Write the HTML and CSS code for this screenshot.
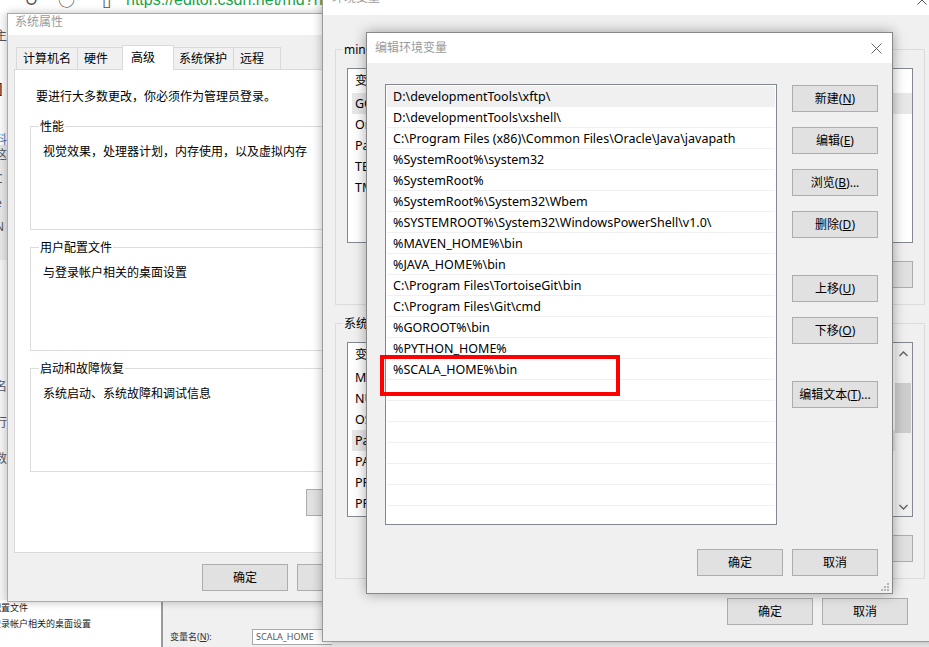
FILE: index.html
```html
<!DOCTYPE html>
<html lang="zh-CN">
<head>
<meta charset="utf-8">
<title>编辑环境变量</title>
<link rel="stylesheet" href="styles.css">
</head>
<body>
<div class="desktop">

  <!-- page behind the dialogs -->
  <div class="browser-bar">
    <span class="bb-icon">↻</span>
    <span class="bb-icon bb-home">○</span>
    <span class="bb-icon bb-sq">▯</span>
    <span class="bb-url">https://editor.csdn.net/md?not_checkout=1</span>
  </div>
  <div class="page-strip">
    <div class="ps-white"><span class="ps-ch">主</span><span class="ps-ch ps-b">]</span><span class="ps-ch ps-blue">料</span></div>
    <div class="ps-gray"><span class="ps-ch">这</span><span class="ps-ch">C</span><span class="ps-ch">e</span><span class="ps-ch">N</span></div>
    <div class="ps-light"><span class="ps-ch">名</span><span class="ps-ch">行</span><span class="ps-ch">数</span></div>
  </div>
  <div class="back-dialog">
    <div class="back-left">
      <span class="back-line">配置文件</span>
      <span class="back-line">登录帐户相关的桌面设置</span>
    </div>
    <div class="back-right">
      <span class="back-label">变量名(<u>N</u>):</span>
      <span class="back-input">SCALA_HOME</span>
    </div>
  </div>

  <!-- 系统属性 -->
  <section class="win win-sys">
    <header class="titlebar sys-titlebar"><span class="title">系统属性</span></header>
    <div class="sys-body">
      <div class="tabs">
        <div class="tab tab-w60">计算机名</div>
        <div class="tab">硬件</div>
        <div class="tab tab-active">高级</div>
        <div class="tab tab-w60">系统保护</div>
        <div class="tab">远程</div>
      </div>
      <div class="tab-panel">
        <p class="intro">要进行大多数更改，你必须作为管理员登录。</p>
        <div class="group sys-group">
          <div class="group-label">性能</div>
          <p class="group-text">视觉效果，处理器计划，内存使用，以及虚拟内存</p>
        </div>
        <div class="group sys-group">
          <div class="group-label">用户配置文件</div>
          <p class="group-text">与登录帐户相关的桌面设置</p>
        </div>
        <div class="group sys-group">
          <div class="group-label">启动和故障恢复</div>
          <p class="group-text">系统启动、系统故障和调试信息</p>
        </div>
        <div class="panel-actions"><button class="btn btn-wide">环境变量(<u>N</u>)...</button></div>
      </div>
      <div class="dlg-actions sys-actions">
        <button class="btn">确定</button>
        <button class="btn">取消</button>
        <button class="btn">应用(<u>A</u>)</button>
      </div>
    </div>
  </section>

  <!-- 环境变量 -->
  <section class="win win-env">
    <header class="titlebar env-titlebar">
      <span class="title">环境变量</span>
      <svg class="close-x" width="10" height="10" viewBox="0 0 10 10"><path d="M0.5 0.5L9.5 9.5M9.5 0.5L0.5 9.5" stroke="#555" stroke-width="1" fill="none"/></svg>
    </header>
    <div class="env-body">
      <div class="group env-group">
        <div class="group-label">minsx 的用户变量(<u>U</u>)</div>
        <div class="env-list">
          <div class="env-rows">
            <div class="env-head">变量</div>
            <div class="env-row env-sel">GOPATH</div>
            <div class="env-row">OneDrive</div>
            <div class="env-row">Path</div>
            <div class="env-row">TEMP</div>
            <div class="env-row">TMP</div>
          </div>
        </div>
        <div class="group-actions">
          <button class="btn">新建(<u>N</u>)...</button>
          <button class="btn">编辑(<u>E</u>)...</button>
          <button class="btn">删除(<u>D</u>)</button>
        </div>
      </div>
      <div class="group env-group env-group2">
        <div class="group-label">系统变量(<u>S</u>)</div>
        <div class="env-list">
          <div class="env-rows">
            <div class="env-head">变量</div>
            <div class="env-row">MAVEN_HOME</div>
            <div class="env-row">NUMBER_OF_PROCESSORS</div>
            <div class="env-row">OS</div>
            <div class="env-row env-sel">Path</div>
            <div class="env-row">PATHEXT</div>
            <div class="env-row">PROCESSOR_ARCHITECTURE</div>
            <div class="env-row">PROCESSOR_IDENTIFIER</div>
          </div>
          <div class="vscroll">
            <svg class="sc-arrow" width="9" height="6" viewBox="0 0 9 6"><path d="M0.5 5L4.5 1L8.5 5" stroke="#606060" stroke-width="1.3" fill="none"/></svg>
            <div class="sc-track"><div class="sc-thumb"></div></div>
            <svg class="sc-arrow" width="9" height="6" viewBox="0 0 9 6"><path d="M0.5 1L4.5 5L8.5 1" stroke="#606060" stroke-width="1.3" fill="none"/></svg>
          </div>
        </div>
        <div class="group-actions">
          <button class="btn">新建(<u>W</u>)...</button>
          <button class="btn">编辑(<u>I</u>)...</button>
          <button class="btn">删除(<u>L</u>)</button>
        </div>
      </div>
      <div class="dlg-actions env-actions">
        <button class="btn">确定</button>
        <button class="btn">取消</button>
      </div>
    </div>
  </section>

  <!-- 编辑环境变量 -->
  <section class="win win-edit">
    <header class="titlebar edit-titlebar">
      <span class="title">编辑环境变量</span>
      <svg class="close-x" width="11" height="11" viewBox="0 0 11 11"><path d="M0.5 0.5L10.5 10.5M10.5 0.5L0.5 10.5" stroke="#666" stroke-width="1" fill="none"/></svg>
    </header>
    <div class="edit-body">
      <div class="edit-main">
        <div class="path-list">
          <div class="path-row path-sel">D:\developmentTools\xftp\</div>
          <div class="path-row">D:\developmentTools\xshell\</div>
          <div class="path-row">C:\Program Files (x86)\Common Files\Oracle\Java\javapath</div>
          <div class="path-row">%SystemRoot%\system32</div>
          <div class="path-row">%SystemRoot%</div>
          <div class="path-row">%SystemRoot%\System32\Wbem</div>
          <div class="path-row">%SYSTEMROOT%\System32\WindowsPowerShell\v1.0\</div>
          <div class="path-row">%MAVEN_HOME%\bin</div>
          <div class="path-row">%JAVA_HOME%\bin</div>
          <div class="path-row">C:\Program Files\TortoiseGit\bin</div>
          <div class="path-row">C:\Program Files\Git\cmd</div>
          <div class="path-row">%GOROOT%\bin</div>
          <div class="path-row">%PYTHON_HOME%</div>
          <div class="path-row">%SCALA_HOME%\bin</div>
          <div class="path-row"></div>
          <div class="path-row"></div>
          <div class="path-row"></div>
          <div class="path-row"></div>
          <div class="path-row"></div>
          <div class="path-row"></div>
          <div class="path-row"></div>
        </div>
        <div class="edit-buttons">
          <button class="btn">新建(<u>N</u>)</button>
          <button class="btn mt15">编辑(<u>E</u>)</button>
          <button class="btn mt14">浏览(<u>B</u>)...</button>
          <button class="btn mt15">删除(<u>D</u>)</button>
          <button class="btn mt36">上移(<u>U</u>)</button>
          <button class="btn mt14">下移(<u>O</u>)</button>
          <button class="btn mt36">编辑文本(<u>T</u>)...</button>
        </div>
      </div>
      <div class="dlg-actions edit-actions">
        <button class="btn">确定</button>
        <button class="btn">取消</button>
      </div>
    </div>
    <svg class="grip" width="8" height="8" viewBox="0 0 8 8"><rect x="6" y="0" width="2" height="2" fill="#b5b5b5"/><rect x="3" y="3" width="2" height="2" fill="#b5b5b5"/><rect x="6" y="3" width="2" height="2" fill="#b5b5b5"/><rect x="0" y="6" width="2" height="2" fill="#b5b5b5"/><rect x="3" y="6" width="2" height="2" fill="#b5b5b5"/><rect x="6" y="6" width="2" height="2" fill="#b5b5b5"/></svg>
    <div class="highlight-box"></div>
  </section>

</div>
</body>
</html>
```

FILE: styles.css
```css
* { box-sizing: border-box; }
html, body { margin: 0; padding: 0; }
body {
  width: 929px;
  height: 647px;
  overflow: hidden;
  background: #f0f0f0;
  font-family: "Noto Sans", "Noto Sans CJK SC", sans-serif;
  font-size: 12px;
  line-height: 16px;
  color: #000;
}
p { margin: 0; }
u { text-decoration: underline; text-underline-offset: 1px; }

.desktop { position: relative; width: 929px; height: 647px; overflow: hidden; }

/* ---------- background page ---------- */
.browser-bar {
  position: absolute; left: 0; top: 0;
  width: 929px; height: 13px;
  background: #fff;
  overflow: hidden;
  display: flex;
  align-items: flex-start;
  padding-left: 24px;
}
.bb-icon { margin-top: -10px; font-size: 17px; line-height: 20px; color: #555; width: 34px; }
.bb-sq { width: 24px; margin-left: 10px; }
.bb-url { margin-top: -10px; font-size: 16px; line-height: 20px; color: #1aa34a; font-family: "Liberation Sans", sans-serif; }

.page-strip {
  position: absolute; left: 0; top: 13px;
  width: 8px; height: 590px;
  display: flex; flex-direction: column;
  background: #f2f2f2;
  overflow: hidden;
}
.ps-white { height: 132px; background: #fbfbfb; display: flex; flex-direction: column; padding-top: 16px; gap: 38px; }
.ps-gray { height: 115px; background: #e6e6e6; display: flex; flex-direction: column; gap: 10px; padding-top: 2px; border-top: 1px solid #ddd; }
.ps-light { height: 343px; background: #f4f4f4; display: flex; flex-direction: column; gap: 22px; padding-top: 120px; }
.ps-ch { font-size: 12px; line-height: 14px; color: #555; margin-left: -5px; }
.ps-b { color: #222; font-size: 14px; margin-left: -2px; }
.ps-blue { color: #4b6fa8; }

.back-dialog {
  position: absolute; left: 0; top: 600px;
  width: 929px; height: 47px;
  display: flex;
  background: #e9e9e9;
}
.back-left {
  width: 161px; background: #fff;
  display: flex; flex-direction: column;
}
.back-line { font-size: 9px; line-height: 16px; color: #222; margin-left: -8px; }
.back-right {
  flex: 1;
  background: #f0f0f0;
  border-left: 2px solid #9a9a9a;
  display: flex; align-items: flex-end;
  padding: 0 0 4px 7px;
}
.back-label { font-size: 9px; line-height: 12px; color: #333; width: 82px; }
.back-input {
  width: 80px; height: 16px;
  background: #fff; border: 1px solid #a8a8a8; border-right: none;
  font-size: 9px; line-height: 14px; color: #555; padding-left: 3px;
  margin-bottom: -2px;
}

/* ---------- windows ---------- */
.win { position: absolute; background: #f0f0f0; }
.titlebar { background: #fff; display: flex; align-items: center; }
.title { color: #9a9a9a; }
.close-x { margin-left: auto; display: block; }

.btn {
  display: flex; align-items: center; justify-content: center;
  width: 86px; height: 27px;
  margin: 0; padding: 0;
  background: #e1e1e1;
  border: 1px solid #adadad;
  font: inherit;
  font-size: 12px;
  color: #000;
  white-space: nowrap;
}

.dlg-actions { display: flex; justify-content: flex-end; gap: 9px; }

.group { border: 1px solid #dcdcdc; }
.group-label {
  width: fit-content;
  margin: -8px 0 0 8px;
  padding: 0 1px;
  line-height: 16px;
  background: #fff;
  white-space: nowrap;
}

/* 系统属性 */
.win-sys {
  left: 7px; top: 13px;
  width: 486px; height: 589px;
  border: 1px solid #aaa;
  box-shadow: 0 0 8px rgba(0,0,0,0.25);
}
.sys-titlebar { height: 21px; padding-left: 7px; align-items: flex-start; }
.sys-titlebar .title { line-height: 16px; }
.sys-body { padding-top: 10px; }
.tabs { display: flex; align-items: flex-end; padding-left: 8px; height: 24px; }
.tab {
  height: 22px;
  min-width: 48px;
  padding: 0 6px;
  display: flex; align-items: center;
  background: #f0f0f0;
  border: 1px solid #d9d9d9;
  border-bottom: none;
  margin-right: -1px;
  white-space: nowrap;
}
.tab-w60 { min-width: 60px; }
.tab-active {
  height: 25px;
  margin: 0 -2px -1px -2px;
  padding: 0 8px;
  min-width: 52px;
  background: #fff;
  position: relative;
  z-index: 1;
}
.tab-panel {
  margin-left: 6px;
  width: 472px; height: 484px;
  background: #fff;
  border: 1px solid #d9d9d9;
}
.intro { margin: 19px 0 0 21px; }
.sys-group { margin: 21px 15px 0 15px; height: 104px; }
.sys-group + .sys-group { margin-top: 17px; }
.group-text { margin: 9px 0 0 12px; }
.panel-actions { display: flex; justify-content: flex-end; margin: 17px 15px 0 0; }
.btn-wide { width: 164px; }
.sys-actions { margin-top: 11px; padding-right: 14px; }

/* 环境变量 */
.win-env {
  left: 322px; top: -16px;
  width: 615px; height: 658px;
  border: 1px solid #9a9a9a;
  box-shadow: 0 0 10px rgba(0,0,0,0.3);
}
.env-titlebar { height: 30px; padding: 0 9px; }
.env-titlebar .title { margin-top: -4px; }
.env-body { padding: 34px 11px 0 12px; }
.env-group { padding: 0 11px 16px 11px; }
.env-group .group-label { background: #f0f0f0; margin-left: -4px; }
.env-group2 { margin-top: 18px; }
.env-list {
  margin-top: 10px;
  height: 175px;
  background: #fff;
  border: 1px solid #828790;
  display: flex;
  overflow: hidden;
}
.env-rows { flex: 1; font-size: 12.5px; }
.env-head { height: 24px; line-height: 24px; padding-left: 7px; }
.env-row { height: 21px; line-height: 21px; margin-left: 4px; padding-left: 3px; }
.env-sel { background: #e8e8e8; }
.vscroll {
  width: 17px;
  background: #f0f0f0;
  display: flex; flex-direction: column; align-items: center;
}
.sc-arrow { margin: 8px 0 6px; display: block; }
.sc-track { flex: 1; width: 17px; padding-top: 20px; }
.sc-thumb { width: 16px; height: 50px; background: #cdcdcd; }
.group-actions { display: flex; justify-content: flex-end; gap: 9px; margin-top: 18px; }
.env-actions { margin-top: 19px; padding-right: 17px; }

/* 编辑环境变量 */
.win-edit {
  left: 366px; top: 32px;
  width: 527px; height: 562px;
  border: 1px solid #888;
  box-shadow: 0 0 12px rgba(0,0,0,0.35);
}
.edit-titlebar { height: 30px; padding: 0 10px 0 8px; }
.edit-body { padding: 21px 14px 0 18px; }
.edit-main { display: flex; align-items: flex-start; }
.path-list {
  width: 392px; height: 441px;
  background: #fff;
  border: 1px solid #828790;
  padding: 1px 1px 0 1px;
  overflow: hidden;
}
.path-row {
  height: 21px;
  padding-top: 2px;
  line-height: 18px;
  font-size: 12.5px;
  border-bottom: 1px solid #f0f0f0;
  padding-left: 6px;
  white-space: nowrap;
}
.path-sel { background: #f0f0f0; }
.edit-buttons { margin-left: 15px; margin-top: 1px; display: flex; flex-direction: column; }
.mt14 { margin-top: 15px; }
.mt15 { margin-top: 15px; }
.mt36 { margin-top: 37px; }
.edit-actions { margin-top: 24px; }
.grip { position: absolute; right: 3px; bottom: 2px; }
.highlight-box {
  position: absolute;
  left: 13px; top: 322px;
  width: 240px; height: 41px;
  border: 4px solid #ff0000;
}
```
